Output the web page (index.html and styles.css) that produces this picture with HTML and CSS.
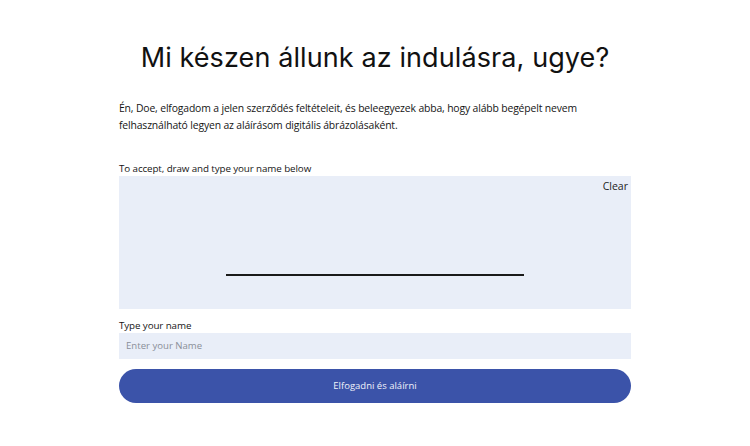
FILE: index.html
```html
<!DOCTYPE html>
<html lang="hu">
<head>
<meta charset="utf-8">
<link rel="stylesheet" href="styles.css">
</head>
<body>
<main class="page">
  <h1 class="title">Mi készen állunk az indulásra, ugye?</h1>
  <p class="intro">Én, Doe, elfogadom a jelen szerződés feltételeit, és beleegyezek abba, hogy alább begépelt nevem felhasználható legyen az aláírásom digitális ábrázolásaként.</p>
  <form class="form">
    <label class="label">To accept, draw and type your name below</label>
    <div class="pad">
      <span class="clear">Clear</span>
      <div class="sign-line"></div>
    </div>
    <label class="label label-name">Type your name</label>
    <div class="input">Enter your Name</div>
    <div class="button">Elfogadni és aláírni</div>
  </form>
</main>
</body>
</html>
```
FILE: styles.css
```css
html, body {
  margin: 0;
  background: #ffffff;
}
body {
  font-family: "Open Sans", "Liberation Sans", sans-serif;
  color: #111111;
}
.page {
  width: 512px;
  margin: 0 auto;
  padding-top: 40px;
}
.title {
  margin: 0;
  font-family: Inter, "Open Sans", sans-serif;
  font-weight: 400;
  font-size: 27px;
  line-height: 36px;
  text-align: center;
  letter-spacing: 0.1px;
  color: #111111;
}
.intro {
  margin: 24px 0 0;
  font-size: 10.4px;
  line-height: 17px;
  letter-spacing: -0.15px;
  color: #151515;
}
.form {
  display: flex;
  flex-direction: column;
  margin-top: 27px;
}
.label {
  font-size: 9.8px;
  line-height: 15px;
  letter-spacing: -0.1px;
  color: #151515;
  height: 15px;
}
.pad {
  position: relative;
  height: 133px;
  background: #e9eef8;
}
.clear {
  position: absolute;
  top: 2px;
  right: 3px;
  font-size: 10.5px;
  line-height: 16px;
  color: #222222;
}
.sign-line {
  position: absolute;
  left: 107px;
  top: 98px;
  width: 298px;
  height: 2px;
  background: #1a1a1a;
}
.label-name {
  margin-top: 9px;
}
.input {
  height: 26px;
  background: #e9eef8;
  padding: 0 7px;
  font-size: 9.6px;
  line-height: 26px;
  color: #8a8f99;
}
.button {
  margin-top: 10px;
  height: 34px;
  border-radius: 17px;
  background: #3b53a9;
  color: #f0f2fa;
  font-size: 9.5px;
  line-height: 34px;
  text-align: center;
}
```
